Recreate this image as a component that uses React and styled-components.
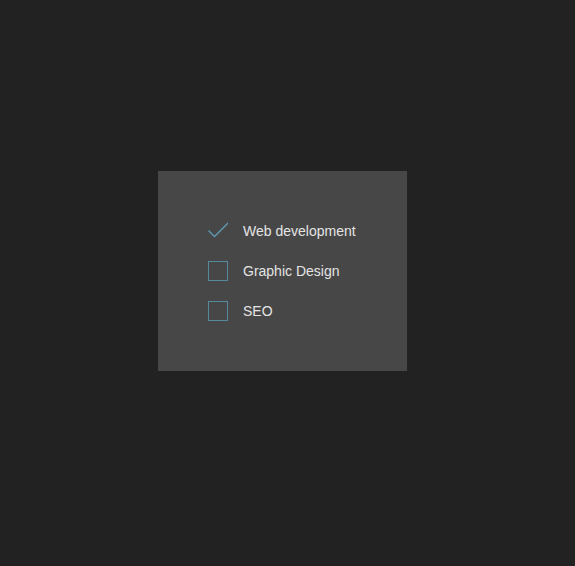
import { useState } from "react";
import styled, { createGlobalStyle } from "styled-components";

const GlobalStyle = createGlobalStyle`
  html, body {
    margin: 0;
    padding: 0;
    background: #222222;
  }
`;

const Page = styled.div`
  min-height: 100vh;
  box-sizing: border-box;
  padding: 0 10px 24px 0;
  display: flex;
  align-items: center;
  justify-content: center;
  font-family: "Liberation Sans", Arial, sans-serif;
`;

const Panel = styled.div`
  width: 249px;
  box-sizing: border-box;
  background: #474747;
  padding: 50px;
  display: flex;
  flex-direction: column;
  gap: 20px;
`;

const Row = styled.label`
  display: flex;
  align-items: center;
  height: 20px;
  cursor: pointer;
`;

const Box = styled.span`
  width: 20px;
  height: 20px;
  flex: none;
  box-sizing: border-box;
  border: ${(p) => (p.checked ? "none" : "1px solid #56899b")};
  display: flex;
  align-items: center;
  justify-content: center;
`;

const Text = styled.span`
  margin-left: 15px;
  font-size: 14px;
  white-space: nowrap;
  color: #e4e4e4;
`;

const Check = () => (
  <svg width="20" height="20" viewBox="0 0 20 20">
    <polyline
      points="0.5,9.5 6.5,15.5 20,2"
      fill="none"
      stroke="#5e99b3"
      strokeWidth="1.4"
    />
  </svg>
);

const items = ["Web development", "Graphic Design", "SEO"];

const App = () => {
  const [checked, setChecked] = useState([true, false, false]);

  const toggle = (i) => {
    setChecked(checked.map((c, j) => (j === i ? !c : c)));
  };

  return (
    <Page>
      <GlobalStyle />
      <Panel>
        {items.map((item, i) => (
          <Row key={item} onClick={() => toggle(i)}>
            <Box checked={checked[i]}>{checked[i] && <Check />}</Box>
            <Text>{item}</Text>
          </Row>
        ))}
      </Panel>
    </Page>
  );
};

export default App;
